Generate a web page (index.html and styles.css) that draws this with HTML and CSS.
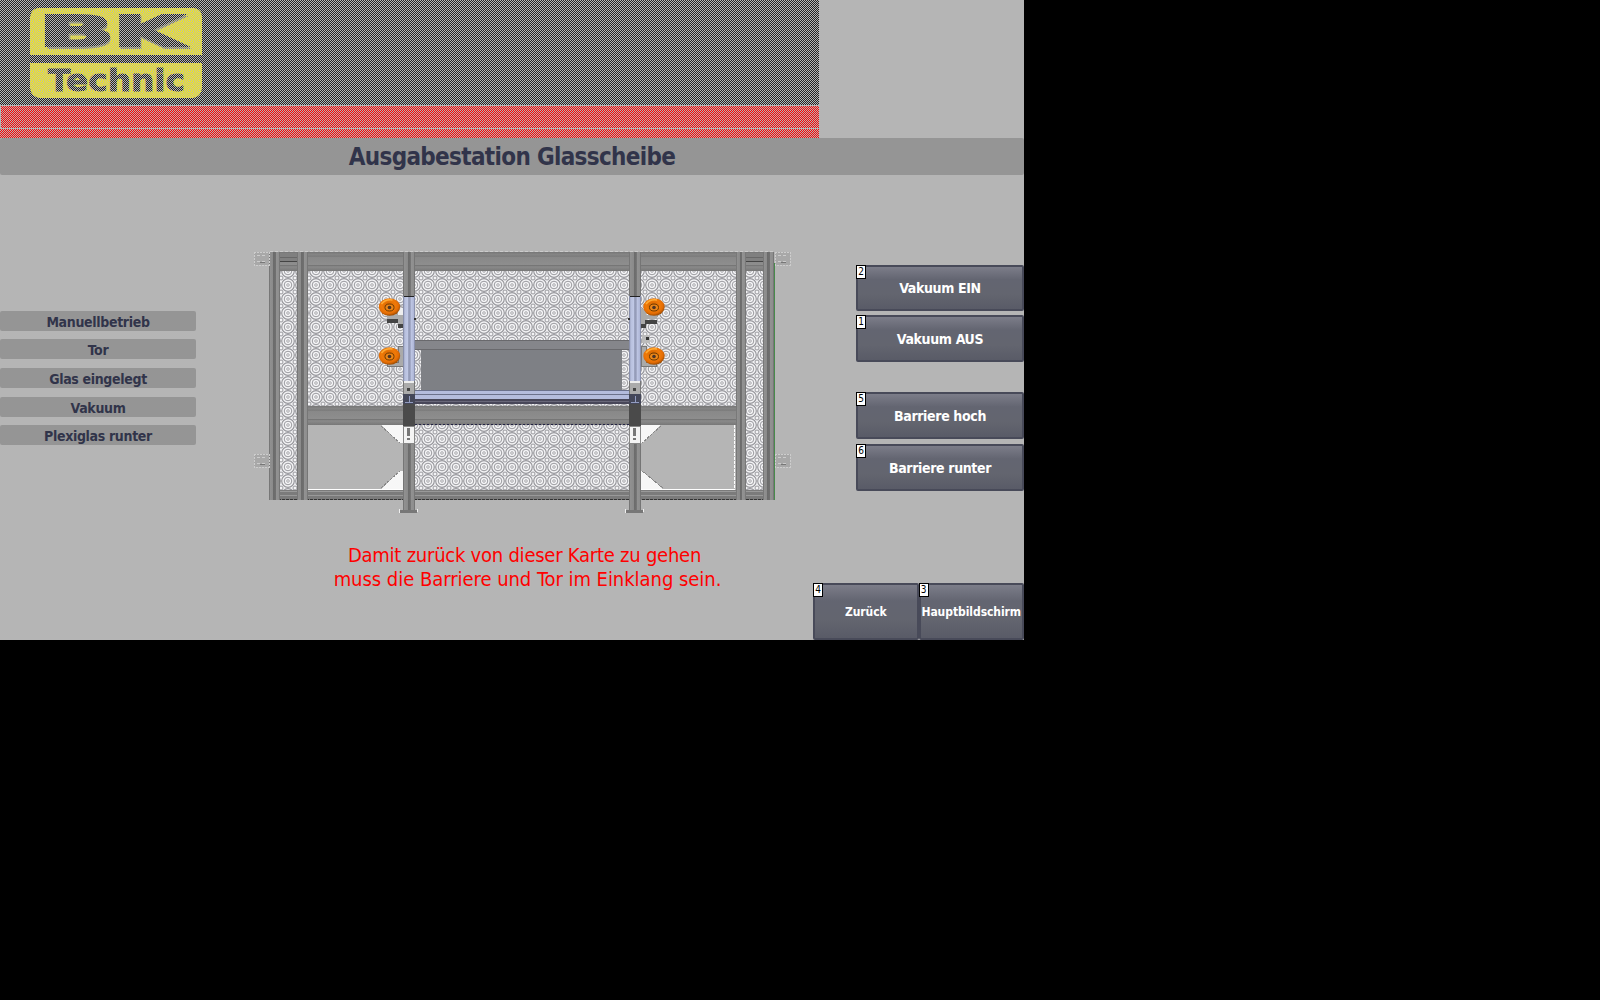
FILE: index.html
```html
<!DOCTYPE html>
<html lang="de">
<head>
<meta charset="utf-8">
<title>Ausgabestation Glasscheibe</title>
<link rel="stylesheet" href="styles.css">
</head>
<body>
<main class="screen">
  <header class="banner">
    <svg class="logo" width="176" height="94" viewBox="28 6 176 94" role="img" aria-label="BK Technic">
      <path class="plate" d="M38 8H194Q202 9 202 17V55H30V17Q31 9 38 8Z"/>
      <path class="plate" d="M30 63H202V88Q201 97 193 98H39Q31 96 30 88Z"/>
      <g class="bk-shadow"><text x="41" y="48" textLength="74" lengthAdjust="spacingAndGlyphs">B</text><text x="114" y="48" textLength="70" lengthAdjust="spacingAndGlyphs">K</text></g>
      <g class="bk"><text x="38" y="46" textLength="77" lengthAdjust="spacingAndGlyphs">B</text><text x="113" y="46" textLength="70" lengthAdjust="spacingAndGlyphs">K</text></g>
      <text class="technic" x="48" y="90.500" textLength="137" lengthAdjust="spacingAndGlyphs">Technic</text>
    </svg>
    <div class="stripe wide"></div>
    <div class="stripe thin"></div>
  </header>
  <h1 class="title">Ausgabestation Glasscheibe</h1>
  <div class="work">
    <ul class="states">
      <li>Manuellbetrieb</li>
      <li>Tor</li>
      <li class="down clipped">Glas eingelegt</li>
      <li class="down">Vakuum</li>
      <li>Plexiglas runter</li>
    </ul>
    <section class="center">
      <svg class="machine" width="548" height="270" viewBox="248 246 548 270" shape-rendering="crispEdges">
        <defs>
          <pattern id="mesh" width="14" height="14" x="281" y="264" patternUnits="userSpaceOnUse">
            <rect width="14" height="14" fill="#f4f4f6"/>
            <g fill="none" stroke="#98989d" shape-rendering="auto">
              <circle cx="7" cy="7" r="6.300" stroke-width="1.200"/>
              <circle cx="7" cy="7" r="3.800"/>
              <circle cx="7" cy="7" r="1.300" stroke-width=".8"/>
              <circle r="2"/><circle cx="14" r="2"/><circle cy="14" r="2"/><circle cx="14" cy="14" r="2"/>
            </g>
          </pattern>
          <linearGradient id="post" x2="1" y2="0">
            <stop offset="0" stop-color="#686868"/><stop offset=".12" stop-color="#909090"/><stop offset=".38" stop-color="#8a8a8a"/><stop offset=".4" stop-color="#6b6b6b"/><stop offset=".62" stop-color="#707070"/><stop offset=".65" stop-color="#929292"/><stop offset=".88" stop-color="#8e8e8e"/><stop offset="1" stop-color="#686868"/>
          </linearGradient>
          <linearGradient id="beam" x2="0" y2="1">
            <stop offset="0" stop-color="#777"/><stop offset=".18" stop-color="#898989"/><stop offset=".2" stop-color="#606060"/><stop offset=".25" stop-color="#888"/><stop offset=".7" stop-color="#8e8e8e"/><stop offset=".72" stop-color="#606060"/><stop offset=".77" stop-color="#8b8b8b"/><stop offset="1" stop-color="#777"/>
          </linearGradient>
          <linearGradient id="blue" x2="1" y2="0">
            <stop offset="0" stop-color="#777d98"/><stop offset=".15" stop-color="#b7bfdd"/><stop offset=".38" stop-color="#c0c8e5"/><stop offset=".4" stop-color="#7f86a4"/><stop offset=".48" stop-color="#a6aeca"/><stop offset=".6" stop-color="#858ba8"/><stop offset=".65" stop-color="#c0c8e5"/><stop offset=".88" stop-color="#b0b8d8"/><stop offset="1" stop-color="#777d98"/>
          </linearGradient>
          <radialGradient id="lamp" cx=".45" cy=".4" r=".65">
            <stop offset="0" stop-color="#d06200"/><stop offset=".5" stop-color="#f07a08"/><stop offset=".72" stop-color="#e46d05"/><stop offset="1" stop-color="#7f3e00"/>
          </radialGradient>
          <g id="suction" shape-rendering="auto">
            <ellipse rx="10.700" ry="8.800" fill="url(#lamp)"/>
            <path d="M-8-3Q-4-8 3-7" fill="none" stroke="#ffac35" stroke-width="1.500"/>
            <ellipse cy=".5" rx="4.500" ry="3.500" fill="#eb8618" stroke="#703900"/>
            <circle cy=".5" r="1.800" fill="#4a3428"/>
          </g>
          <g id="column">
            <rect x="403" y="252" width="12" height="46" fill="url(#post)"/>
            <rect x="403" y="296" width="12" height="87" fill="url(#blue)"/>
            <path d="M404 296h10" stroke="#222"/>
            <rect x="403" y="381" width="11" height="14" fill="#ababab" stroke="#777"/>
            <path d="M404 382h10" stroke="#eee" stroke-width="2"/>
            <rect x="407" y="388" width="3" height="3" fill="#444"/>
            <rect x="403" y="394" width="12" height="10" fill="#444759"/>
            <path d="M409 396v6M405 402h8" stroke="#929cc0" stroke-width="1"/>
            <rect x="403" y="404" width="12" height="22" fill="#4a4a4a"/>
            <rect x="403" y="442" width="12" height="69" fill="url(#post)"/>
            <rect x="403" y="426" width="11" height="17" fill="#f4f4f4" stroke="#888"/>
            <rect x="407" y="428" width="3" height="8" fill="#777"/><rect x="407" y="438" width="3" height="2" fill="#777"/>
            <rect x="400" y="510" width="17" height="3" fill="#777"/>
            <path d="M399.500 509v4M417.500 509v3" stroke="#eee"/>
          </g>
          <g id="bracket">
            <rect x="254" y="252" width="15" height="13" fill="#a8a8a8" stroke="#cdcdcd" stroke-dasharray="2 1"/>
            <path d="M257 255h8M257 261h8" stroke="#ccc" stroke-dasharray="3 2"/><path d="M260 262h5" stroke="#777"/>
          </g>
        </defs>
        <rect x="280" y="262" width="18" height="229" fill="url(#mesh)"/>
        <rect x="746" y="262" width="18" height="229" fill="url(#mesh)"/>
        <rect x="308" y="271" width="428" height="136" fill="url(#mesh)"/>
        <rect x="414" y="425" width="216" height="65" fill="url(#mesh)"/>
        <path d="M308 489.500h95M640 489.500h95" fill="none" stroke="#fff"/>
        <path d="M734.500 425v64" stroke="#fff" stroke-dasharray="3 1"/>
        <path d="M381 425h22v18h-3zM381 489h22v-18h-3zM661 425h-22v18h3zM663 489h-24v-18h3z" fill="#f7f7f7"/>
        <path d="M381 426l19 17M381 488l19-17M661 426l-19 17M663 488l-21-17" stroke="#888" stroke-dasharray="3 1"/>
        <rect x="270" y="252" width="503" height="19" fill="url(#beam)"/>
        <path d="M270 251.500h503" stroke="#ccc" stroke-dasharray="3 2"/>
        <rect x="280" y="253" width="18" height="9" fill="#808080"/><rect x="746" y="253" width="18" height="9" fill="#808080"/>
        <path d="M280 257.500h18M746 257.500h18" stroke="#686868"/>
        <path d="M280 261.500h18M746 261.500h18" stroke="#444"/>
        <rect x="308" y="406" width="428" height="19" fill="url(#beam)"/>
        <path d="M415 424.500h216" stroke="#224" stroke-dasharray="2 2"/>
        <rect x="270" y="490" width="503" height="10" fill="#7b7b7b"/>
        <path d="M270 491.500h503M270 495.500h503" stroke="#999"/><path d="M270 499.500h503" stroke="#333" stroke-dasharray="3 1"/>
        <rect x="269" y="252" width="11" height="248" fill="url(#post)"/><rect x="297" y="252" width="11" height="248" fill="url(#post)"/>
        <rect x="736" y="252" width="10" height="248" fill="url(#post)"/><rect x="763" y="252" width="11" height="248" fill="url(#post)"/>
        <path d="M774.500 263v237" stroke="#478a4b"/>
        <use href="#bracket"/><use href="#bracket" y="202"/><use href="#bracket" x="521"/><use href="#bracket" x="521" y="202"/>
        <rect x="415" y="340" width="215" height="10" fill="#85868b"/><path d="M415 340.500h215M415 349.500h215" stroke="#69696d"/>
        <rect x="421" y="350" width="201" height="40" fill="#7e8085"/>
        <rect x="414" y="390" width="217" height="9" fill="#b4bcdd"/><path d="M414 390.500h217M414 394.500h217" stroke="#6b718b"/>
        <rect x="414" y="399" width="217" height="5" fill="#484759"/><path d="M414 401.500h217" stroke="#686779"/>
        <path d="M395 310h8v18h-5v-9h-11v-4h8z" fill="#aaa"/><path d="M387 319h11v4h-11zM398 324h5v4h-5z" fill="#444"/><path d="M398 309h5v6h-5z" fill="#eee"/>
        <path d="M398 346h5v20h-16v-4h11z" fill="#aaa" stroke="#777"/>
        <path d="M641 309h5v6h11v4h-11v9h-5z" fill="#aaa"/><path d="M645 320h12v4h-12zM641 324h5v4h-5z" fill="#444"/>
        <rect x="642" y="335" width="8" height="8" fill="#bbb"/><rect x="646" y="337" width="3" height="3" fill="#333"/>
        <path d="M641 346h5v16h10v4h-15z" fill="#aaa" stroke="#777"/>
        <use href="#column"/><use href="#column" x="226"/>
        <path d="M415.500 302v16M628.500 302v16" stroke="#ddd"/><path d="M414 319h2M628 319h2" stroke="#333" stroke-width="2"/>
        <use href="#suction" x="389.500" y="307"/><use href="#suction" x="389.500" y="356"/>
        <use href="#suction" x="654" y="307"/><use href="#suction" x="654" y="356"/>
      </svg>
      <p class="notice"><span class="first">Damit zurück von dieser Karte zu gehen</span><br>muss die Barriere und Tor im Einklang sein.</p>
    </section>
    <aside class="controls">
      <button><i>2</i>Vakuum EIN</button>
      <button class="tall"><i>1</i>Vakuum AUS</button>
      <button class="tall apart"><i>5</i>Barriere hoch</button>
      <button class="tall last"><i>6</i>Barriere runter</button>
      <nav class="nav">
        <button><i>4</i>Zurück</button>
        <button><i>3</i>Hauptbildschirm</button>
      </nav>
    </aside>
  </div>
</main>
</body>
</html>
```
FILE: styles.css
```css
* { box-sizing: border-box; }
body { margin: 0; background: #000; font-family: "DejaVu Sans Condensed", "DejaVu Sans", sans-serif; }
.screen { width: 1024px; height: 640px; overflow: hidden; background: #b5b5b5; }
.banner { position: relative; display: flex; flex-direction: column; width: 819px; height: 138px; background: #222; }
.banner::after { content: ""; position: absolute; inset: 0; background: repeating-conic-gradient(#b5b5b5 0 25%, transparent 0 50%) 1px 0 / 2px 2px; }
.logo { display: block; margin: 6px 0 5px 28px; }
.plate { fill: #fff200; }
.bk { font: bold 43px "DejaVu Sans", sans-serif; fill: #222; stroke: #222; stroke-width: 2; }
.bk-shadow { font: bold 43px "DejaVu Sans", sans-serif; fill: #82825c; stroke: #82825c; stroke-width: 2; }
.technic { font: bold 31px "DejaVu Sans", sans-serif; fill: #222; stroke: #222; stroke-width: .8; }
.stripe { background: #f00; border-top: 1px solid #b5b5b5; }
.wide { height: 23px; border-left: 1px solid #b5b5b5; }
.thin { height: 10px; }
.title { margin: 0; height: 37px; border-radius: 2px; background: #959595; color: #31344a; font-size: 24px; line-height: 39px; letter-spacing: -.67px; text-align: center; }
.work { display: grid; grid-template-columns: 254px 548px 1fr; height: 465px; }
.states { display: flex; flex-direction: column; gap: 8px; width: 196px; margin: 136px 0 0; padding: 0; list-style: none; }
.states li { height: 20px; border-radius: 2px; background: #959595; color: #31344a; font-size: 14px; font-weight: bold; line-height: 22px; letter-spacing: -.33px; text-align: center; }
.states .down { margin-top: 1px; }
.states .clipped { overflow: hidden; }
.center { padding-top: 71px; margin-left: -6px; }
.machine { display: block; }
.notice { margin: 27px 0 0; padding-left: 11px; width: 548px; color: #f00; font-size: 20px; line-height: 24px; letter-spacing: -.04px; text-align: center; white-space: nowrap; }
.first { margin-right: 6px; letter-spacing: -.24px; }
.controls { display: flex; flex-direction: column; align-items: flex-end; padding-top: 90px; }
button { position: relative; display: block; width: 168px; height: 46px; margin: 0 0 4px; padding: 0; border: 2px solid #484a59; border-radius: 2px; background: linear-gradient(#7c7d89 0, #636571 30%, #63656f 65%, #595b67 100%); color: #fff; font: bold 14px "DejaVu Sans Condensed", "DejaVu Sans", sans-serif; letter-spacing: -.35px; white-space: nowrap; }
button i { position: absolute; left: -2px; top: -2px; width: 10px; height: 14px; border: 1px solid #000; background: #fff; color: #000; font: 10px/12px "DejaVu Sans Condensed", sans-serif; letter-spacing: 0; text-align: center; }
.tall { height: 47px; }
.apart { margin: 26px 0 5px; }
.nav { display: flex; width: 211px; margin-top: 88px; }
.nav button { flex: 1; height: 57px; margin: 0; font-size: 12px; letter-spacing: -.06px; }
```
